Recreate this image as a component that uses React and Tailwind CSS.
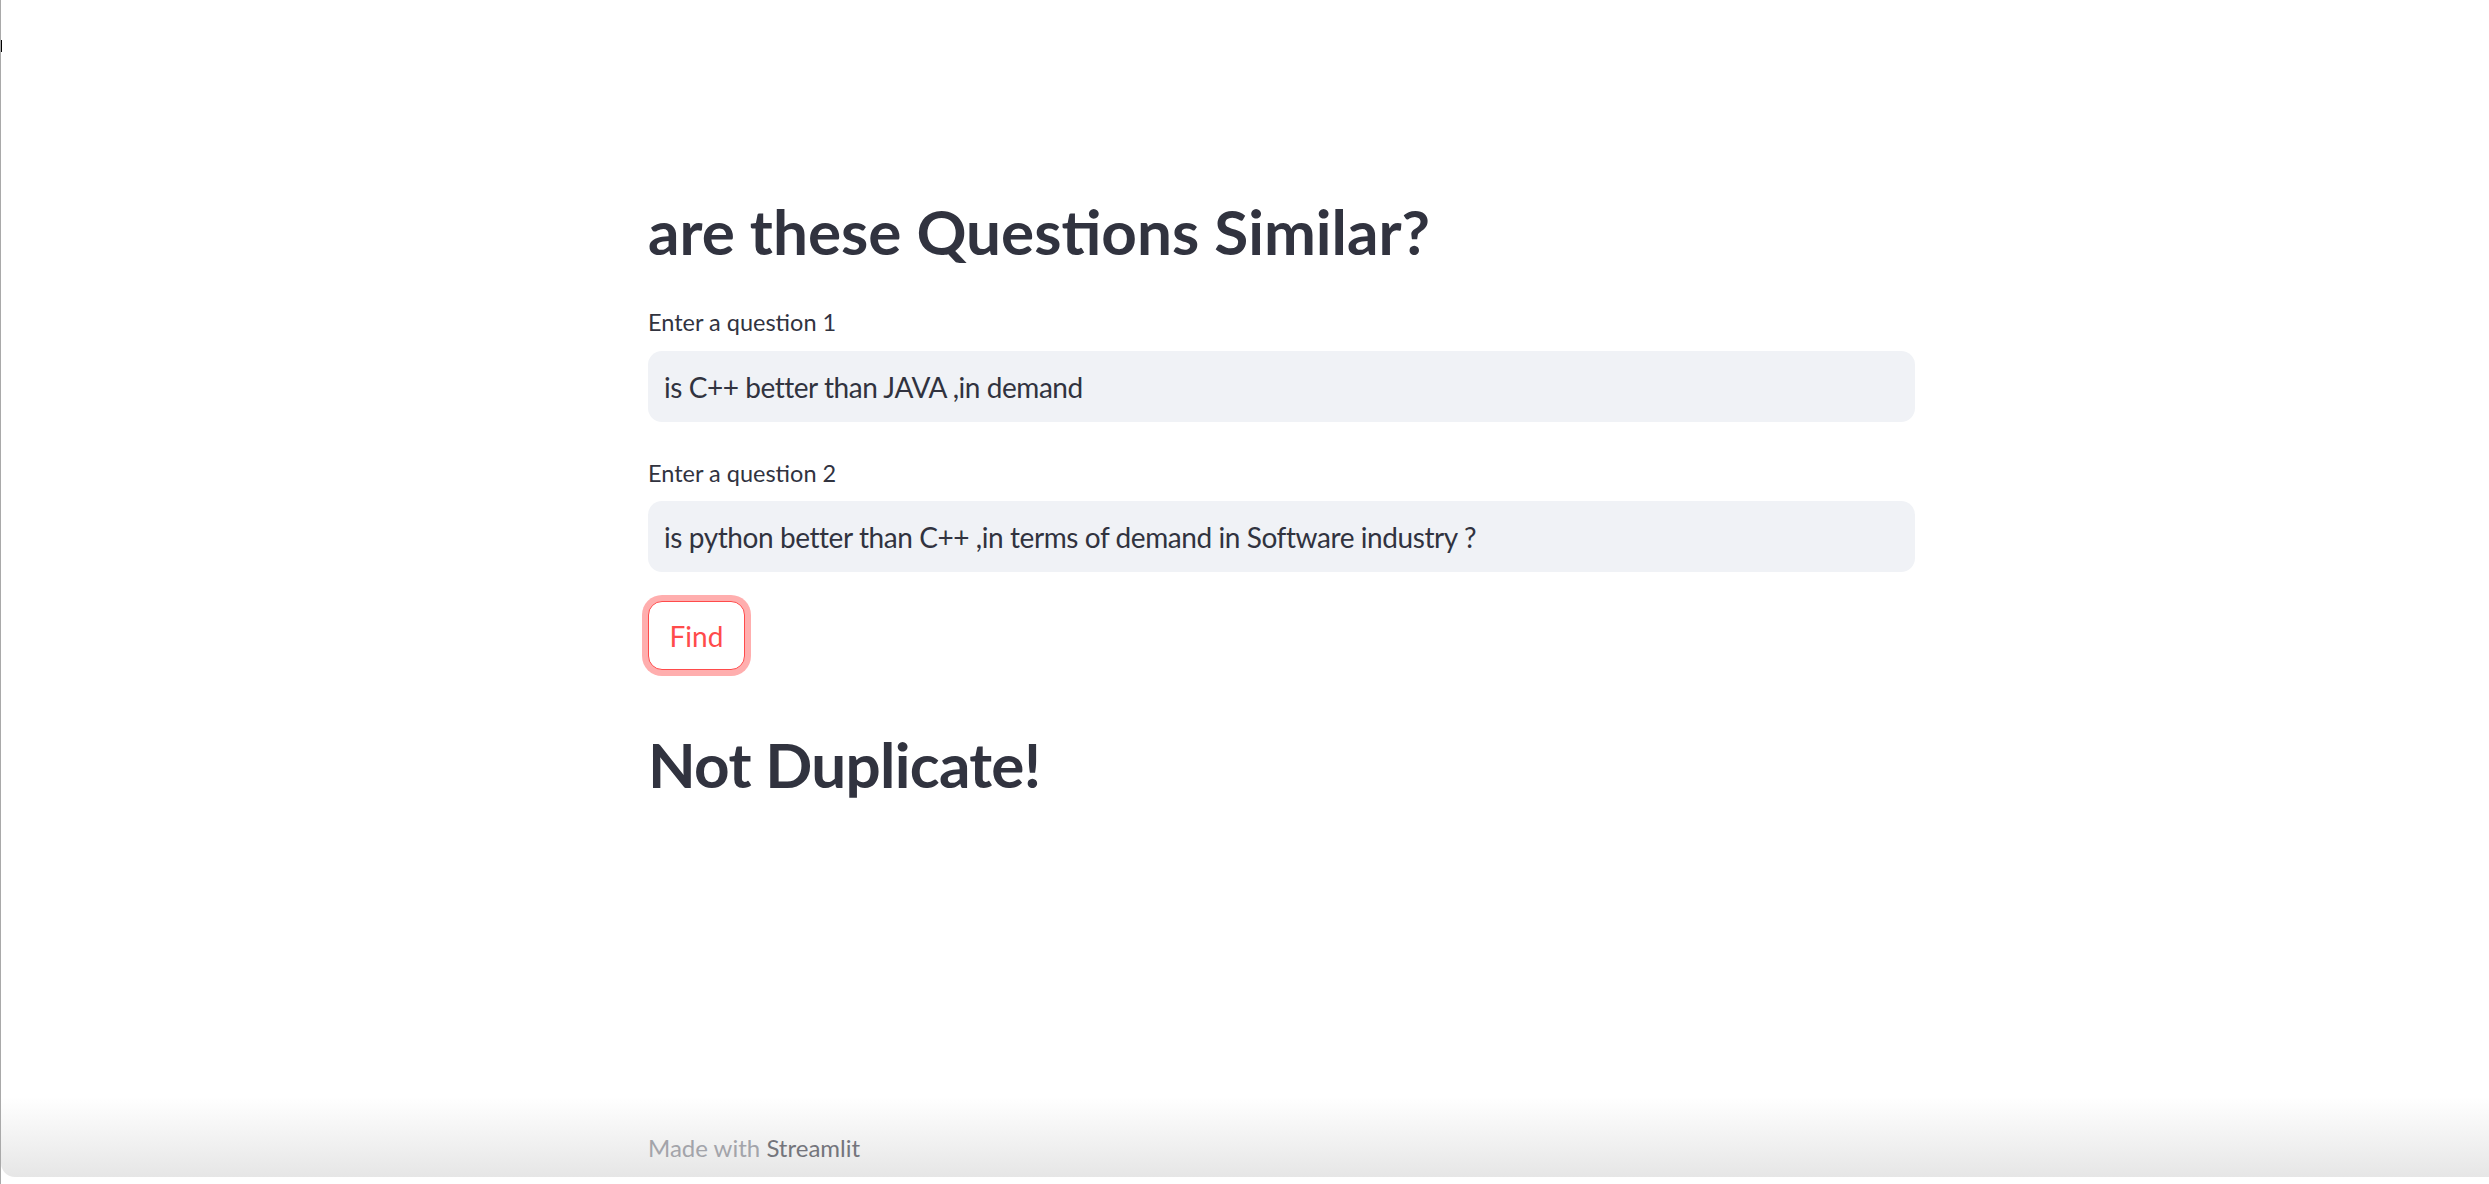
import React from "react";

export default function App() {
  const font = { fontFamily: "Lato, 'Noto Sans', sans-serif" };
  return (
    <div
      className="relative h-[1184px] w-full bg-white border-l border-[#a9a9a9] flex flex-col overflow-hidden"
      style={font}
    >
      <div className="absolute left-[-1px] top-[40px] h-[12px] w-[2px] bg-black" />
      <main className="flex flex-col pl-[647px] pt-[194px] text-[#31333f]">
        <div className="w-[1267px] flex flex-col">
          <h1 className="text-[62px] leading-[74px] font-bold">are these Questions Similar?</h1>
          <label className="mt-[40px] text-[23.5px] leading-[28px]">Enter a question 1</label>
          <div className="mt-[15px] h-[71px] rounded-[14px] bg-[#f0f2f6] flex items-center px-[16px] text-[28px] tracking-[-0.45px]">
            is C++ better than JAVA ,in demand
          </div>
          <label className="mt-[37px] text-[23.5px] leading-[28px]">Enter a question 2</label>
          <div className="mt-[14px] h-[71px] rounded-[14px] bg-[#f0f2f6] flex items-center px-[16px] text-[28px] tracking-[-0.42px]">
            is python better than C++ ,in terms of demand in Software industry ?
          </div>
          <div className="mt-[29px] flex">
            <button className="h-[69px] w-[97px] rounded-[14px] border border-[#ff4b4b] bg-white text-[#ff4b4b] text-[28px] shadow-[0_0_0_6px_rgba(255,75,75,0.45)] flex items-center justify-center">
              Find
            </button>
          </div>
          <h2 className="mt-[57px] text-[62px] leading-[74px] font-bold tracking-[-0.7px]">Not Duplicate!</h2>
        </div>
      </main>
      <footer className="mt-auto">
        <div className="h-[80px] bg-gradient-to-b from-white to-[#e6e6e6] pl-[647px] pt-[37px] rounded-bl-[14px]">
          <span className="text-[24px] leading-[28px] text-[#a3a4aa]">Made with </span>
          <span className="text-[24px] leading-[28px] text-[#74757c]">Streamlit</span>
        </div>
        <div className="h-[7px] bg-white" />
      </footer>
    </div>
  );
}
